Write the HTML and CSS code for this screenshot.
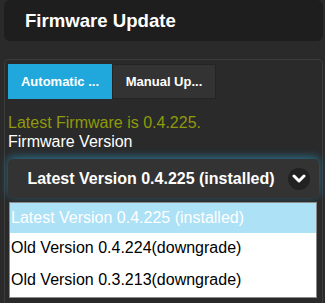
FILE: index.html
```html
<!DOCTYPE html>
<html lang="en">
<head>
  <meta charset="UTF-8" />
  <title>Firmware Update</title>
  <link rel="stylesheet" href="styles.css">
</head>
<body>
  <header class="card header">
    <h1>Firmware Update</h1>
  </header>

  <div class="card panel">
    <div class="tabs">
      <button class="tab active">Automatic ...</button>
      <button class="tab">Manual Up...</button>
    </div>

    <p class="latest">Latest Firmware is 0.4.225.</p>
    <label class="field-label">Firmware Version</label>

    <div class="select">
      <span class="select-value">Latest Version 0.4.225 (installed)</span>
      <span class="chevron">
        <svg width="14" height="10" viewBox="0 0 14 10">
          <path d="M2 2 L7 7 L12 2" fill="none" stroke="#fff" stroke-width="3" stroke-linecap="round" stroke-linejoin="round"/>
        </svg>
      </span>
    </div>

    <ul class="options">
      <li class="selected">Latest Version 0.4.225 (installed)</li>
      <li>Old Version 0.4.224(downgrade)</li>
      <li>Old Version 0.3.213(downgrade)</li>
    </ul>
  </div>
</body>
</html>
```

FILE: styles.css
```css
* {
  box-sizing: border-box;
  font-family: 'Liberation Sans', Arial, sans-serif;
}

html, body {
  overflow: hidden;
}

body {
  margin: 0;
  padding: 0 2px 0 4px;
  background: #2a2a2a;
  color: #fff;
  height: 303px;
}

.card {
  border-radius: 6px;
}

.header {
  background: #1e1e1e;
  height: 41px;
  padding: 0 21px;
  display: flex;
  align-items: center;
}

h1 {
  margin: 0;
  font-size: 18.6px;
  font-weight: bold;
}

.panel {
  margin-top: 18px;
  border: 1px solid #3c3c3c;
  border-bottom: none;
  border-radius: 5px 5px 0 0;
  padding: 4px 3px 0 3px;
  height: 244px;
}

.tabs {
  display: flex;
}

.tab {
  width: 104px;
  height: 35px;
  border: 1px solid #242424;
  background: #333333;
  color: #fff;
  font-size: 13px;
  font-weight: bold;
  padding: 0;
}

.tab.active {
  background: #20a8dc;
  border-color: #20a8dc;
}

.latest {
  margin: 15px 0 0;
  color: #8e9a0c;
  font-size: 16px;
  line-height: 18px;
}

.field-label {
  display: block;
  font-size: 16px;
  line-height: 20px;
}

.select {
  margin: 7px 0 0;
  height: 39px;
  background: #333333;
  border-radius: 5px;
  box-shadow: 0 -2px 8px rgba(40, 170, 220, 0.55);
  display: flex;
  align-items: center;
  padding: 0 9px 0 14px;
}

.select-value {
  flex: 1;
  font-size: 16px;
  font-weight: bold;
  text-align: center;
  white-space: nowrap;
}

.chevron {
  width: 22px;
  height: 22px;
  border-radius: 50%;
  background: #222222;
  display: flex;
  align-items: center;
  justify-content: center;
  margin-left: 8px;
}

.options {
  list-style: none;
  margin: 4px 2px 0 1px;
  padding: 0;
  background: #fff;
  border: 1px solid #8a8a8a;
}

.options li {
  color: #000;
  font-size: 16px;
  height: 32px;
  line-height: 30px;
  padding-left: 1px;
}

.options li.selected {
  background: #ade1f6;
  color: #fff;
  height: 30px;
}
```
